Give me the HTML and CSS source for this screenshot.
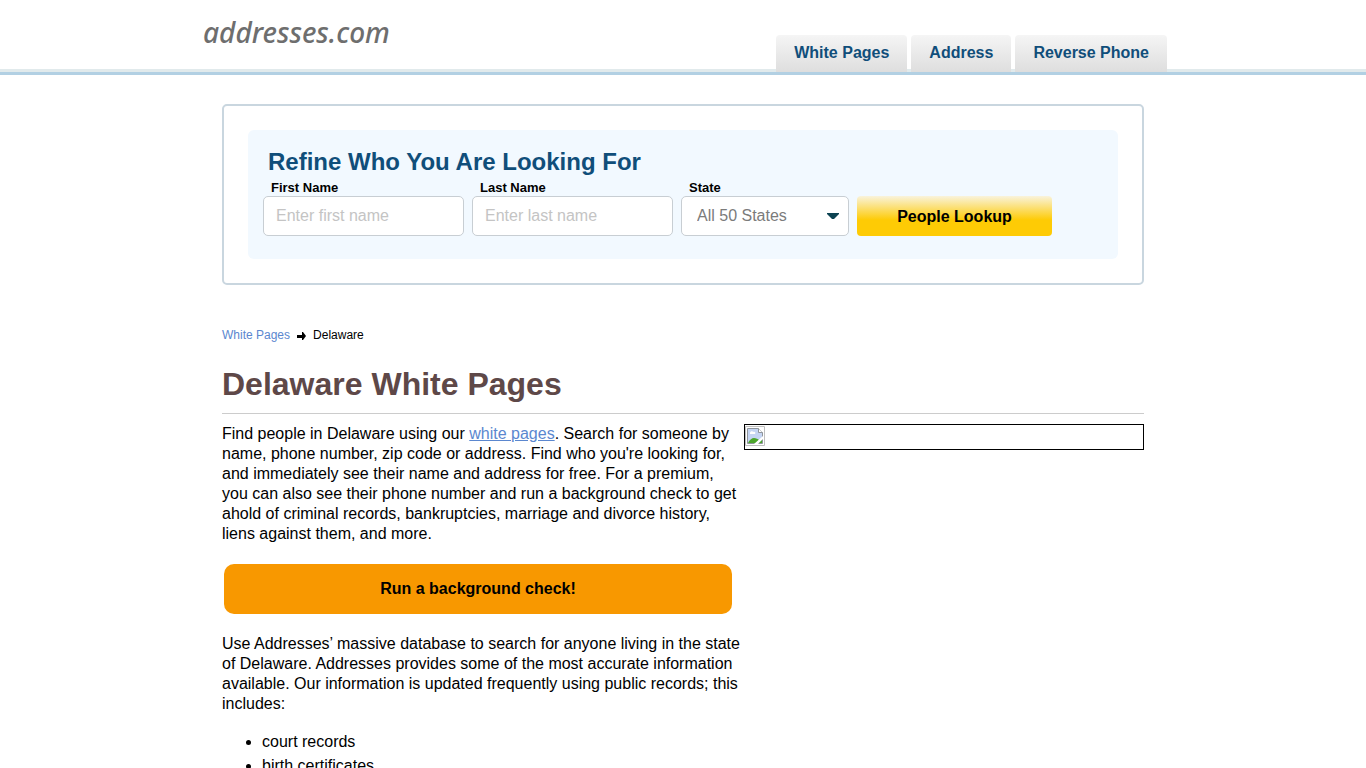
FILE: index.html
```html
<!DOCTYPE html>
<html lang="en">
<head>
  <meta charset="UTF-8">
  <meta name="viewport" content="width=device-width, initial-scale=1.0">
  <title>Delaware White Pages</title>
  <link rel="stylesheet" href="styles.css">
</head>
<body>

<header class="header">
  <div class="header-inner">
    <a href="#" class="logo">addresses.com</a>
    <nav class="tabs">
      <a href="#">White Pages</a>
      <a href="#">Address</a>
      <a href="#">Reverse Phone</a>
    </nav>
  </div>
</header>

<main class="container">
  <section class="search-box">
    <form class="search-form">
      <h2>Refine Who You Are Looking For</h2>
      <div class="fields">
        <div class="field">
          <label for="first-name">First Name</label>
          <input type="text" id="first-name" placeholder="Enter first name">
        </div>
        <div class="field">
          <label for="last-name">Last Name</label>
          <input type="text" id="last-name" placeholder="Enter last name">
        </div>
        <div class="field field-state">
          <label for="state">State</label>
          <select id="state">
            <option>All 50 States</option>
            <option>Delaware</option>
          </select>
          <svg class="caret" width="12" height="6" viewBox="0 0 12 6"><path d="M0 0h12v1L7 6H5L0 1z" fill="#0d4352"/></svg>
        </div>
        <button type="button" class="lookup">People Lookup</button>
      </div>
    </form>
  </section>

  <nav class="breadcrumb">
    <a href="#">White Pages</a>
    <svg width="9" height="10" viewBox="0 0 9 10"><path d="M0 5h5V2h1l3 4-3 4H5V8H0z" fill="#000"/></svg>
    <span>Delaware</span>
  </nav>

  <h1>Delaware White Pages</h1>

  <div class="content">
    <div class="text">
      <p>Find people in Delaware using our <a href="#">white pages</a>. Search for someone by name, phone number, zip code or address. Find who you're looking for, and immediately see their name and address for free. For a premium, you can also see their phone number and run a background check to get ahold of criminal records, bankruptcies, marriage and divorce history, liens against them, and more.</p>
      <button type="button" class="check">Run a background check!</button>
      <p>Use Addresses’ massive database to search for anyone living in the state of Delaware. Addresses provides some of the most accurate information available. Our information is updated frequently using public records; this includes:</p>
      <ul>
        <li>court records</li>
        <li>birth certificates</li>
      </ul>
    </div>
    <div class="map">
      <svg width="20" height="20" viewBox="0 0 20 20">
        <path d="M.5.5h19v19H.5z" fill="#fff" stroke="#c0c0c0"/>
        <path d="M2.500 2.500h11l4 4v11h-15z" fill="#c5d5f3" stroke="#8f959b"/>
        <path d="M5 7c0-2 3-2 3-1 2-1 3 1 2 2H5z" fill="#fff"/>
        <path d="M3 17c1-3 4-5 6-5s4 1 5 2l-3 3z" fill="#4ca62c"/>
        <path d="M13.500 2.500v4h4" fill="#fff" stroke="#8f959b"/>
        <path d="M9 18l9-8v3l-5 5z" fill="#fff"/>
        <path d="M14 17l3-3v3z" fill="#4ca62c"/>
      </svg>
    </div>
  </div>
</main>

</body>
</html>
```

FILE: styles.css
```css
* {
  box-sizing: border-box;
}
body {
  margin: 0;
  background: #fff;
  color: #000;
  font-family: "Liberation Sans", Arial, sans-serif;
  font-size: 16px;
  line-height: 20px;
}
.header {
  background: linear-gradient(#e1eaec, #e1eaec) bottom / 100% 3px no-repeat;
  border-bottom: 3px solid #b2d0e3;
}
.header-inner {
  display: flex;
  justify-content: space-between;
  align-items: flex-end;
  max-width: 968px;
  height: 72px;
  margin: 0 auto;
  padding-left: 4px;
}
.logo {
  align-self: flex-start;
  padding-top: 12px;
  color: #6e6e6e;
  font-family: "Noto Sans", "Open Sans", sans-serif;
  font-size: 28px;
  font-style: italic;
  font-weight: 500;
  line-height: 40px;
  text-decoration: none;
}
.tabs {
  display: flex;
  gap: 4px;
}
.tabs a {
  padding: 7px 18px 9px;
  border-radius: 4px 4px 0 0;
  background: linear-gradient(#f5f5f5, #dedede);
  color: #104e7a;
  font-weight: bold;
  line-height: 21px;
  text-decoration: none;
}
.container {
  max-width: 922px;
  margin: 29px auto 0;
}
.search-box {
  padding: 24px;
  border: 2px solid #c9d6df;
  border-radius: 5px;
}
.search-form {
  padding: 17px 15px 23px;
  border-radius: 6px;
  background: #f2f9ff;
}
.search-form h2 {
  margin: 0;
  padding-left: 5px;
  color: #104e7a;
  font-size: 24px;
  line-height: 30px;
}
.fields {
  display: flex;
  flex-wrap: wrap;
  align-items: flex-end;
  gap: 8px;
}
.field {
  position: relative;
  width: 201px;
}
.field-state {
  width: 168px;
}
.field label {
  display: block;
  padding: 2px 0 0 8px;
  font-size: 13px;
  font-weight: bold;
  line-height: 17px;
}
.field input,
.field select {
  display: block;
  width: 100%;
  height: 40px;
  padding: 0 12px;
  border: 1px solid #c8ced3;
  border-radius: 5px;
  background: #fff;
  font-family: inherit;
  font-size: 16px;
}
.field input::placeholder {
  color: #c4c4c4;
}
.field select {
  appearance: none;
  padding: 0 15px 1px;
  color: #7b7b7b;
}
.caret {
  position: absolute;
  right: 10px;
  bottom: 17px;
  pointer-events: none;
}
.lookup {
  width: 195px;
  height: 40px;
  padding: 2px 0 0;
  border: none;
  border-radius: 4px;
  background: linear-gradient(#f9f3dc, #fecb05 60%);
  font-family: inherit;
  font-size: 16px;
  font-weight: bold;
}
.breadcrumb {
  display: flex;
  align-items: center;
  gap: 7px;
  margin-top: 40px;
  font-size: 12px;
}
.breadcrumb a {
  color: #5b87cf;
  text-decoration: none;
}
h1 {
  margin: 19px 0 10px;
  padding-bottom: 9px;
  border-bottom: 1px solid #ccc;
  color: #5e4848;
  font-size: 32px;
  line-height: 40px;
}
.content {
  display: flex;
  align-items: flex-start;
}
.text {
  flex: 1;
}
.text p {
  margin: 0 0 20px;
}
.text p a {
  color: #5b87cf;
}
.check {
  display: block;
  width: calc(100% - 14px);
  height: 50px;
  margin: 0 2px 20px;
  border: none;
  border-radius: 10px;
  background: #f89800;
  font-family: inherit;
  font-size: 16px;
  font-weight: bold;
}
.text p:last-of-type {
  margin-bottom: 18px;
}
.text ul {
  margin: 0;
  padding-left: 40px;
}
.text li {
  margin-bottom: 4px;
}
.map {
  width: 400px;
  height: 26px;
  padding: 1px 0;
  border: 1px solid #000;
}
.map svg {
  display: block;
}
```
